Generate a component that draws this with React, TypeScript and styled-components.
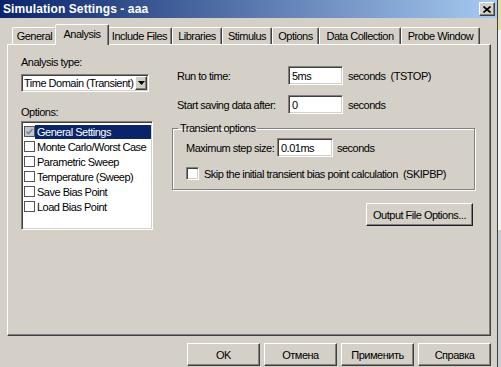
import React from "react";
import styled, { createGlobalStyle, css } from "styled-components";

const GlobalStyle = createGlobalStyle`
  html, body { margin: 0; padding: 0; background: #d4d0c8; }
  body {
    width: 501px; height: 367px; overflow: hidden;
    font-family: "Liberation Sans", Arial, sans-serif;
    font-size: 11px; letter-spacing: -0.5px; color: #000;
  }
  * { box-sizing: border-box; }
`;

const raised = css`
  border: 1px solid;
  border-color: #ffffff #404040 #404040 #ffffff;
  box-shadow: inset -1px -1px 0 #808080;
  background: #d4d0c8;
`;

const sunken = css`
  border: 1px solid;
  border-color: #808080 #ffffff #ffffff #808080;
  box-shadow: inset 1px 1px 0 #404040, inset -1px -1px 0 #d4d0c8;
  background: #ffffff;
`;

const Screen = styled.div`
  display: flex;
  width: 501px;
  height: 367px;
  overflow: hidden;
`;

const Dialog = styled.div`
  width: 498px;
  height: 367px;
  flex: none;
  display: flex;
  flex-direction: column;
  background: #d4d0c8;
  border-right: 1px solid #404040;
`;

const Backdrop = styled.div`
  flex: 1;
  background: linear-gradient(to bottom, #e6dcaa 0 30px, #f3f3f3 30px 230px, #c9cdd6 230px);
`;

const TitleBar = styled.div`
  height: 18px;
  flex: none;
  display: flex;
  align-items: center;
  padding: 0 2px 0 3px;
  background: linear-gradient(to right, #0a246a, #a6caf0);
`;

const TitleText = styled.span`
  color: #fff;
  font-weight: bold;
  font-size: 12px;
  letter-spacing: 0.1px;
`;

const CloseButton = styled.div`
  ${raised};
  margin-left: auto;
  width: 16px;
  height: 14px;
  display: flex;
  align-items: center;
  justify-content: center;
`;

const Body = styled.div`
  display: flex;
  flex-direction: column;
  padding: 6px 6px 0 7px;
`;

const TabStrip = styled.div`
  display: flex;
  align-items: flex-end;
  height: 20px;
  padding-left: 5px;
  position: relative;
  z-index: 1;
`;

const Tab = styled.div<{ $w: number; $active?: boolean }>`
  width: ${(p) => p.$w}px;
  height: 17px;
  flex: none;
  display: flex;
  align-items: center;
  justify-content: center;
  padding-bottom: 1px;
  background: #d4d0c8;
  border: 1px solid;
  border-bottom: none;
  border-color: #ffffff #404040 transparent #ffffff;
  border-radius: 2px 2px 0 0;
  box-shadow: inset -1px 0 0 #808080;
  ${(p) =>
    p.$active &&
    css`
      width: ${p.$w + 4}px;
      height: 21px;
      margin: 0 -2px -1px;
      padding-bottom: 3px;
      position: relative;
      z-index: 2;
    `}
`;

const Panel = styled.div`
  ${raised};
  height: 292px;
  display: flex;
  padding: 11px 0 0 13px;
`;

const LeftCol = styled.div`
  width: 132px;
  flex: none;
  display: flex;
  flex-direction: column;
`;

const Label = styled.div<{ $top?: number }>`
  line-height: 12px;
  height: 12px;
  margin-top: ${(p) => p.$top ?? 0}px;
  white-space: nowrap;
`;

const Select = styled.div`
  ${sunken};
  margin-top: 6px;
  width: 128px;
  height: 18px;
  display: flex;
  align-items: center;
  padding: 0 1px 0 2px;
`;

const SelectText = styled.span`
  flex: 1;
  white-space: nowrap;
`;

const DropButton = styled.div`
  ${raised};
  width: 12px;
  height: 14px;
  display: flex;
  align-items: center;
  justify-content: center;
`;

const ListBox = styled.div`
  ${sunken};
  margin-top: 3px;
  width: 132px;
  height: 109px;
  padding: 2px 1px 0 2px;
`;

const ListRow = styled.div`
  height: 15px;
  display: flex;
  align-items: center;
`;

const FlatCheck = styled.div<{ $checked?: boolean }>`
  width: 11px;
  height: 11px;
  flex: none;
  border: 1px solid #555;
  background: ${(p) => (p.$checked ? "#c3c6d4" : "#fff")};
  display: flex;
  align-items: center;
  justify-content: center;
`;

const ItemText = styled.span<{ $selected?: boolean }>`
  flex: 1;
  padding: 1px 1px 1px 2px;
  white-space: nowrap;
  line-height: 12px;
  ${(p) =>
    p.$selected &&
    css`
      background: #0a246a;
      color: #fff;
    `}
`;

const RightCol = styled.div`
  margin-left: 19px;
  padding-top: 10px;
  width: 303px;
  flex: none;
  display: flex;
  flex-direction: column;
`;

const FieldRow = styled.div<{ $top?: number; $indent?: number }>`
  display: flex;
  align-items: center;
  height: 19px;
  margin-top: ${(p) => p.$top ?? 0}px;
  padding-left: ${(p) => p.$indent ?? 0}px;
  white-space: nowrap;
`;

const RowLabel = styled.span<{ $w: number }>`
  width: ${(p) => p.$w}px;
  flex: none;
`;

const TextInput = styled.div<{ $w: number }>`
  ${sunken};
  width: ${(p) => p.$w}px;
  height: 19px;
  flex: none;
  display: flex;
  align-items: center;
  padding-left: 3px;
`;

const Unit = styled.span<{ $gap: number }>`
  margin-left: ${(p) => p.$gap}px;
`;

const Group = styled.fieldset`
  margin: 8px 0 0 0;
  padding: 4px 9px 9px 13px;
  width: 303px;
  border: 1px solid #808080;
  box-shadow: inset 1px 1px 0 #fff, 1px 1px 0 #fff;
  min-width: 0;
`;

const Legend = styled.legend`
  padding: 0 2px;
  margin-left: -8px;
  line-height: 12px;
`;

const CheckRow = styled.div`
  display: flex;
  align-items: center;
  height: 13px;
  margin-top: 10px;
  white-space: nowrap;
`;

const Checkbox3D = styled.div`
  ${sunken};
  width: 13px;
  height: 13px;
  flex: none;
  margin-right: 5px;
`;

const Button = styled.div<{ $w: number }>`
  ${raised};
  width: ${(p) => p.$w}px;
  height: 23px;
  flex: none;
  display: flex;
  align-items: center;
  justify-content: center;
  white-space: nowrap;
`;

const OutputButton = styled(Button)`
  align-self: flex-end;
  margin: 13px 2px 0 0;
  border-color: #ffffff #202020 #202020 #ffffff;
`;

const ButtonRow = styled.div`
  display: flex;
  justify-content: flex-end;
  gap: 4px;
  margin-top: 7px;
`;

const tabs = [
  { label: "General", w: 45 },
  { label: "Analysis", w: 50, active: true },
  { label: "Include Files", w: 65 },
  { label: "Libraries", w: 50 },
  { label: "Stimulus", w: 50 },
  { label: "Options", w: 47 },
  { label: "Data Collection", w: 82 },
  { label: "Probe Window", w: 79 },
];

const options = [
  { label: "General Settings", checked: true, selected: true },
  { label: "Monte Carlo/Worst Case" },
  { label: "Parametric Sweep" },
  { label: "Temperature (Sweep)" },
  { label: "Save Bias Point" },
  { label: "Load Bias Point" },
];

const CloseIcon = () => (
  <svg width="8" height="7" viewBox="0 0 8 7">
    <path d="M0.5 0.5 L7.5 6.5 M7.5 0.5 L0.5 6.5" stroke="#000" strokeWidth="1.7" />
  </svg>
);

const DownArrow = () => (
  <svg width="7" height="4" viewBox="0 0 7 4">
    <path d="M0 0 H7 L3.5 4 Z" fill="#000" />
  </svg>
);

const GrayCheck = () => (
  <svg width="9" height="9" viewBox="0 0 9 9">
    <path d="M1.5 4.5 L3.5 6.5 L7.5 2" stroke="#7c7f8c" strokeWidth="1.6" fill="none" />
  </svg>
);

export default function App() {
  return (
    <>
      <GlobalStyle />
      <Screen>
        <Dialog>
          <TitleBar>
            <TitleText>Simulation Settings - aaa</TitleText>
            <CloseButton>
              <CloseIcon />
            </CloseButton>
          </TitleBar>
          <Body>
            <TabStrip>
              {tabs.map((t) => (
                <Tab key={t.label} $w={t.w} $active={t.active}>
                  {t.label}
                </Tab>
              ))}
            </TabStrip>
            <Panel>
              <LeftCol>
                <Label>Analysis type:</Label>
                <Select>
                  <SelectText>Time Domain (Transient)</SelectText>
                  <DropButton>
                    <DownArrow />
                  </DropButton>
                </Select>
                <Label $top={14}>Options:</Label>
                <ListBox>
                  {options.map((o) => (
                    <ListRow key={o.label}>
                      <FlatCheck $checked={o.checked}>{o.checked && <GrayCheck />}</FlatCheck>
                      <ItemText $selected={o.selected}>{o.label}</ItemText>
                    </ListRow>
                  ))}
                </ListBox>
              </LeftCol>
              <RightCol>
                <FieldRow $indent={5}>
                  <RowLabel $w={111}>Run to time:</RowLabel>
                  <TextInput $w={55}>5ms</TextInput>
                  <Unit $gap={5}>seconds&nbsp; (TSTOP)</Unit>
                </FieldRow>
                <FieldRow $indent={5} $top={10}>
                  <RowLabel $w={111}>Start saving data after:</RowLabel>
                  <TextInput $w={55}>0</TextInput>
                  <Unit $gap={5}>seconds</Unit>
                </FieldRow>
                <Group>
                  <Legend>Transient options</Legend>
                  <FieldRow>
                    <RowLabel $w={91}>Maximum step size:</RowLabel>
                    <TextInput $w={56}>0.01ms</TextInput>
                    <Unit $gap={4}>seconds</Unit>
                  </FieldRow>
                  <CheckRow>
                    <Checkbox3D />
                    Skip the initial transient bias point calculation&nbsp; (SKIPBP)
                  </CheckRow>
                </Group>
                <OutputButton $w={107}>Output File Options...</OutputButton>
              </RightCol>
            </Panel>
            <ButtonRow>
              <Button $w={73}>OK</Button>
              <Button $w={73}>Отмена</Button>
              <Button $w={73}>Применить</Button>
              <Button $w={73}>Справка</Button>
            </ButtonRow>
          </Body>
        </Dialog>
        <Backdrop />
      </Screen>
    </>
  );
}
